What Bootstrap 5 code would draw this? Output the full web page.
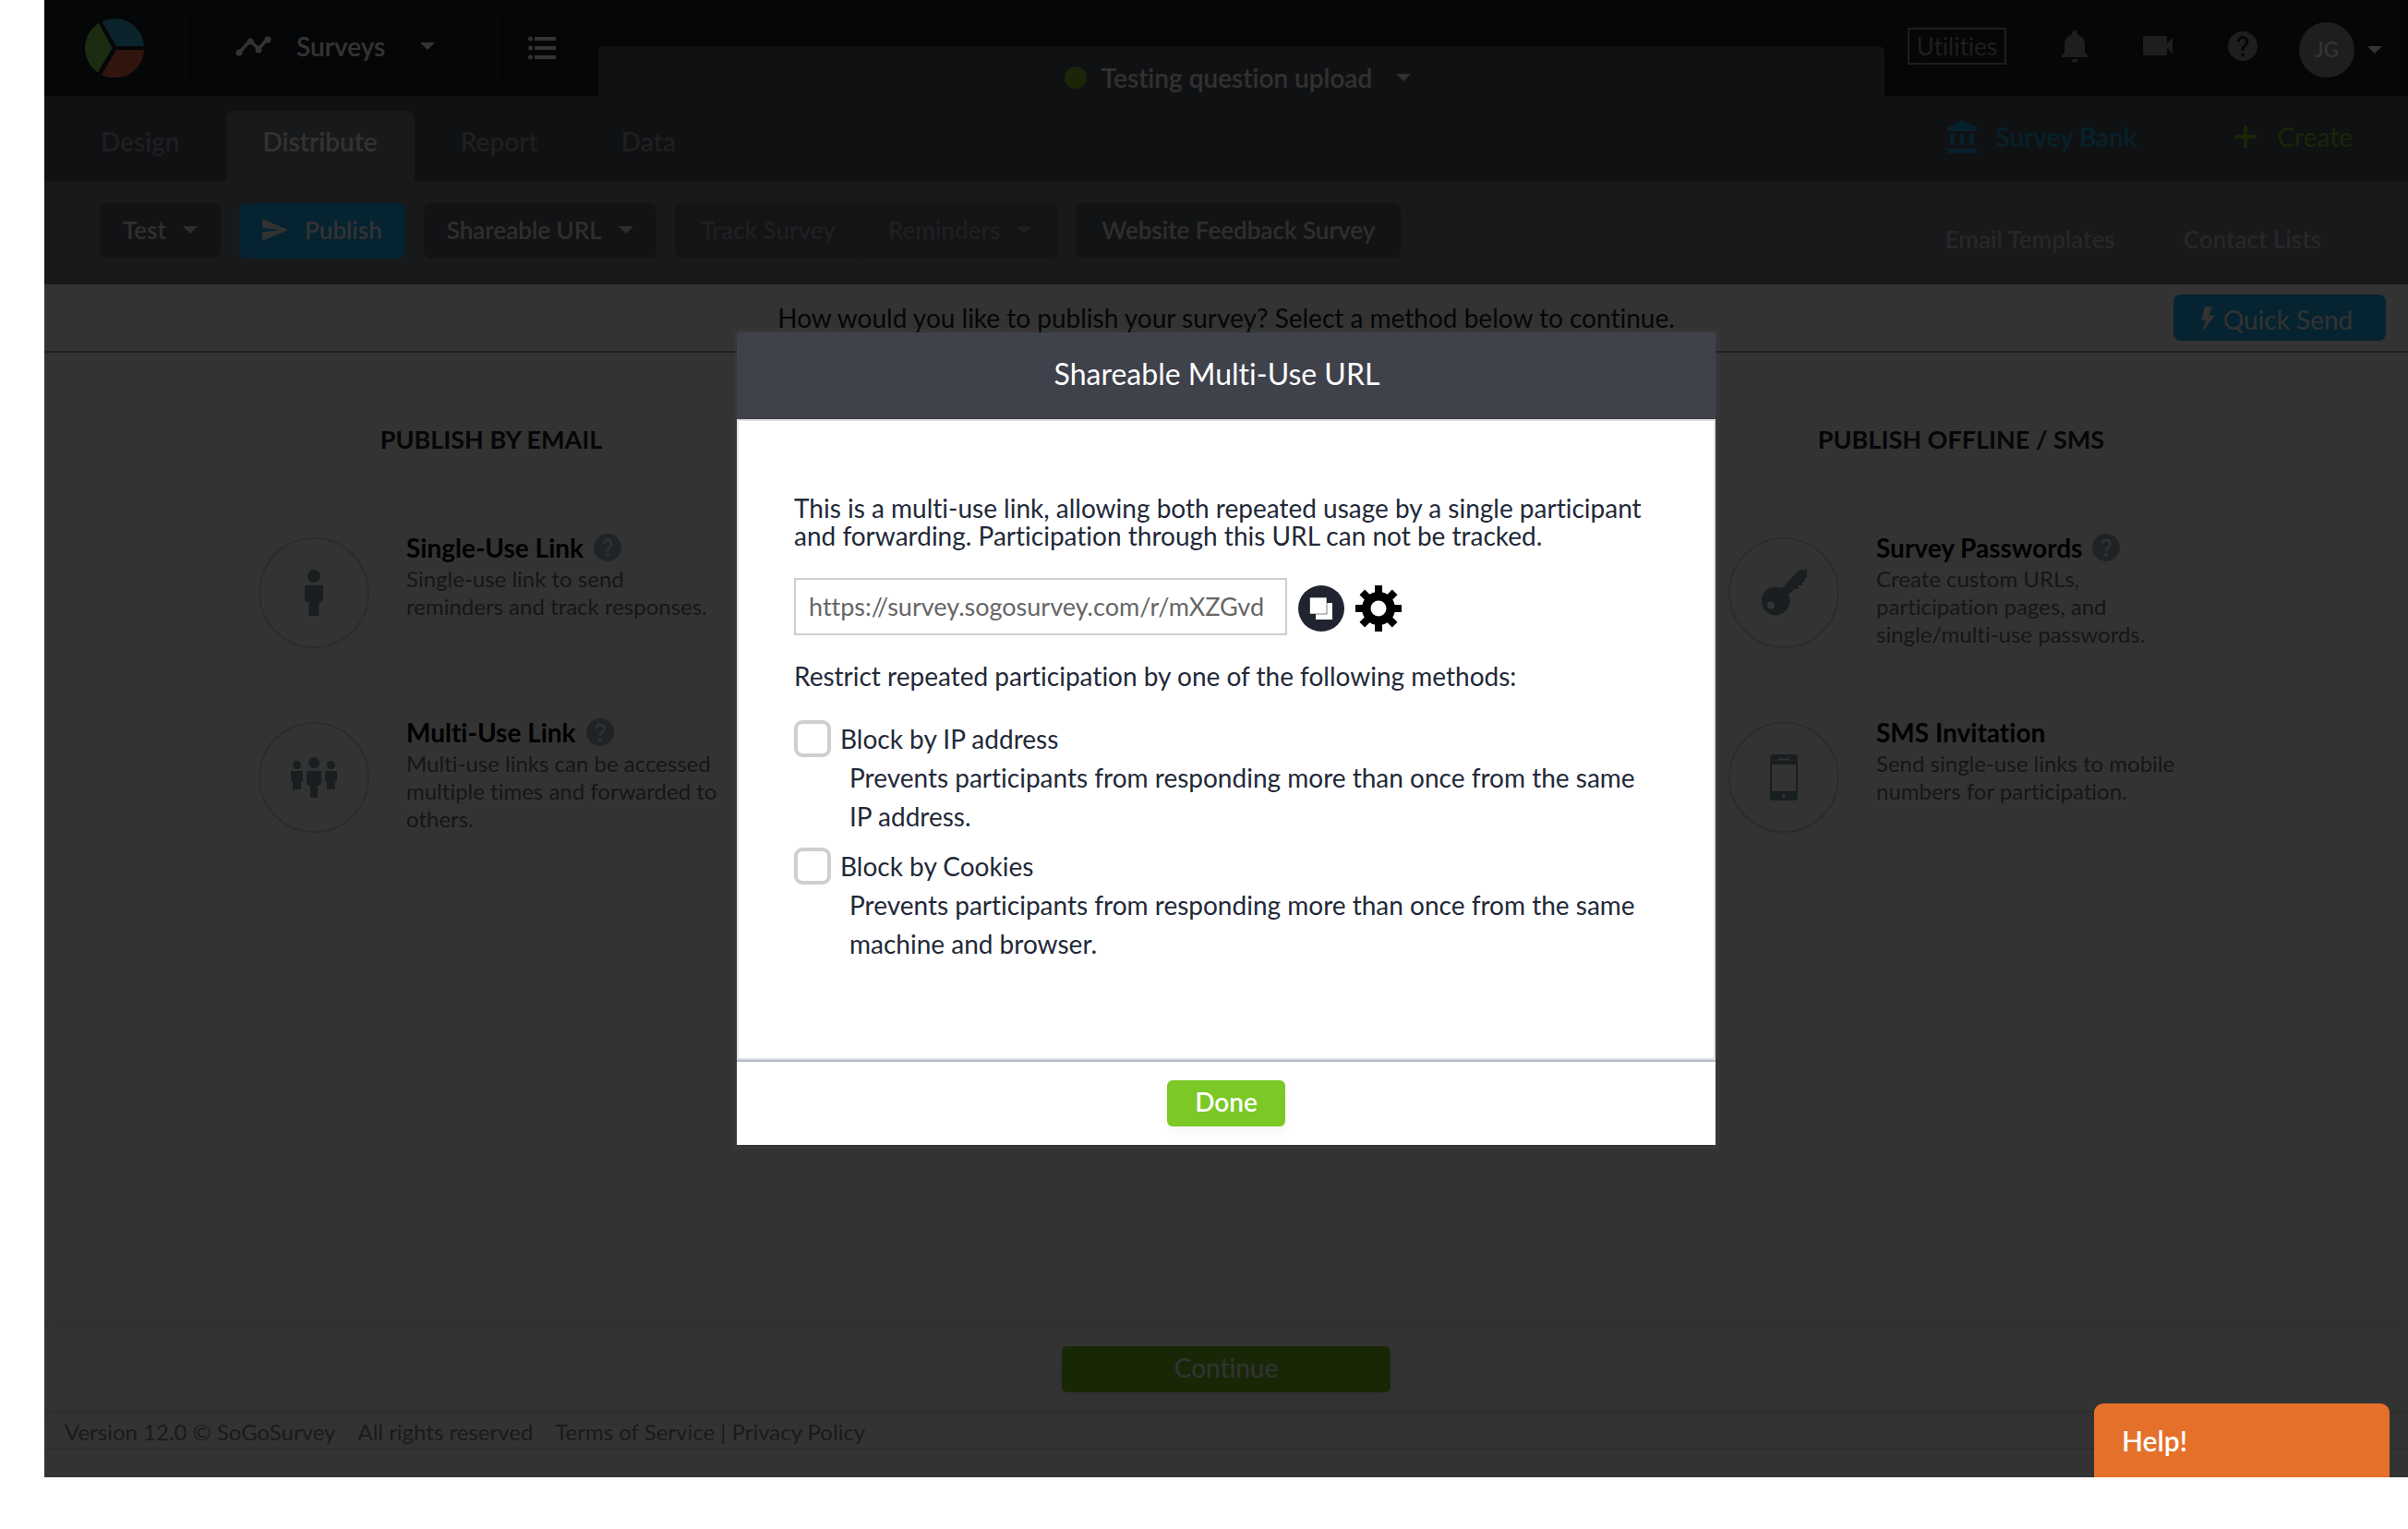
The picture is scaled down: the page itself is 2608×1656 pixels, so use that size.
<!DOCTYPE html>
<html lang="en">
<head>
<meta charset="utf-8">
<meta name="viewport" content="width=device-width, initial-scale=1">
<title>SoGoSurvey - Distribute</title>
<link href="https://cdn.jsdelivr.net/npm/bootstrap@5.3.0/dist/css/bootstrap.min.css" rel="stylesheet">
<style>
  body { font-family: Lato, "Open Sans", sans-serif; font-size: 28px; line-height: 30px; background: #fff; color: #222938; }
  body, input, button { font-variant-ligatures: none; }
  a { text-decoration: none; color: inherit; }
  svg { display: block; flex: none; fill: currentColor; }
  .app { margin: 0 0 56px 48px; min-height: calc(100vh - 56px); background: #fdfdfd; overflow: hidden; }
  .medium { font-weight: 600; }
  .dropdown-toggle { display: inline-flex; align-items: center; }
  .dropdown-toggle::after { margin-left: 18px; border: 8px solid transparent; border-top-color: currentColor; border-bottom: 0; }

  /* top bar */
  .topbar { height: 104px; background: #191e28; color: #fff; padding: 0 28px 0 44px; }
  .rule-v { width: 2px; height: 70px; background: #2d323c; }
  .brand-area { gap: 44px; }
  .module { gap: 27px; padding: 0 67px 4px 52px; }
  .module .dropdown-toggle::after { margin-left: 38px; }
  .menu-list { margin-left: 32px; }
  .survey-title { height: 54px; margin: 0 25px 0 46px; padding: 14px 8px 0 0; gap: 16px; background: #50555f; border-radius: 6px 6px 0 0; color: #f5f5f5; }
  .survey-title .dropdown-toggle::after { margin-left: 26px; }
  .live-dot { width: 24px; height: 24px; border-radius: 50%; background: #87be28; }
  .tools { gap: 60px; color: #969696; height: 100px; }
  .utilities { border: 2px solid #969696; padding: 3px 8px; font-size: 26px; }
  .user { margin: 8px 0 0 -15px; color: #fff; }
  .user.dropdown-toggle::after { margin-left: 14px; }
  .avatar { width: 60px; height: 60px; border-radius: 50%; background: #969696; font-size: 22px; }

  /* section tabs */
  .tabsrow { height: 92px; background: #50555f; padding-left: 21px; }
  .tabsrow .nav { gap: 10px; }
  .tabsrow .nav-link { height: 76px; padding: 18px 40px; border-radius: 8px 8px 0 0; color: #969ba0; font-size: 28px; font-weight: 600; }
  .tabsrow .nav-link.active { background: #787d82; color: #fafafa; }
  .shortcuts { gap: 106px; padding: 0 60px 4px 0; }
  .bank { color: #1ea5dc; gap: 20px; }
  .create { color: #87b928; gap: 22px; }

  /* action row */
  .actions { background: #787d82; padding: 24px 94px 28px 60px; }
  .action-buttons { gap: 20px; }
  .actions .btn { height: 60px; padding: 0 28px 2px; border: 0; border-radius: 8px; background: #5a5f64; color: #e6e6e6; font-size: 26px; font-weight: 600; line-height: 30px; }
  .actions .action-buttons > .dropdown-toggle { padding: 0 25px 2px; }
  .actions .btn-publish { background: #19afee; color: #fafafa; gap: 18px; padding: 0 25px 2px; display: inline-flex; align-items: center; }
  .actions .btn:disabled { background: #5f646e; color: #969ba0; opacity: 1; }
  .actions .btn-group .btn + .btn { border-left: 2px solid #6e737d; }
  .sublinks { gap: 74px; padding-top: 18px; font-size: 26px; color: #bec3c8; }

  /* prompt */
  .prompt { height: 74px; border-bottom: 2px solid #8caabe; padding: 0 24px; color: #191e28; }
  .btn-quick { width: 230px; height: 50px; border: 0; border-radius: 8px; background: #19afee; color: #fafafa; font-size: 28px; line-height: 30px; padding: 4px 6px 0 0; gap: 9px; }

  /* methods */
  .methods { padding: 79px 86px 0; }
  .methods h2 { font-size: 27px; line-height: 30px; font-weight: 700; margin: 0 0 87px; color: #191e28; text-align: center; }
  .method { min-height: 200px; padding-left: 146px; gap: 40px; }
  .method-icon { width: 120px; height: 120px; margin-top: 4px; border: 2px solid #d7d7d7; border-radius: 50%; color: #7d96a0; flex: none; }
  .method h3 { font-size: 28px; line-height: 30px; font-weight: 700; margin: 0 0 4px; color: #000; gap: 11px; }
  .method p { font-size: 24px; line-height: 30px; color: #6e6e6e; margin: 0; white-space: nowrap; }
  .hint { color: #9bafb9; }

  .continue-bar { padding: 20px 0; box-shadow: 0 0 20px rgba(0, 0, 0, .12); }
  .btn-go { background: #7bc826; color: #fff; border: 0; border-radius: 6px; height: 50px; line-height: 30px; padding: 0 0 4px; box-shadow: 0 6px 12px rgba(0, 0, 0, .04); }
  .btn-go:hover { background: #6fb522; color: #fff; }
  .btn-continue { width: 356px; font-size: 28px; }
  .legal { height: 42px; margin-bottom: 30px; padding: 4px 22px 0; gap: 24px; border-top: 2px solid #e6e6e6; border-bottom: 2px solid #e6e6e6; font-size: 24px; color: #828296; }

  /* dialog */
  .dim { background: rgba(0, 0, 0, .8); z-index: 10; }
  .share-modal { z-index: 20; }
  .share-modal .modal-dialog { max-width: 1060px; margin: 360px auto 0; }
  .share-modal .modal-content { border: 0; border-radius: 0; color: #222938; box-shadow: 0 0 0 4px rgba(255, 255, 255, .02); }
  .share-modal .modal-header { height: 94px; padding: 0 20px 4px 0; border: 0; border-radius: 0; background: #3f424b; color: #fff; }
  .share-modal .modal-title { font-size: 32px; line-height: 40px; font-weight: 400; }
  .share-modal .modal-body { padding: 79px 66px 92px 60px; border: 2px solid #dfe1e6; border-bottom: 0; }
  .share-modal .modal-footer { padding: 20px; border-radius: 0; border-top: 2px solid #b2bac4; box-shadow: 0 -2px 0 #dfe1e6; }
  .share-modal .modal-footer > * { margin: 0; }
  .url-row { margin: 31px 0 29px; gap: 12px; }
  .url-box { width: 534px; height: 62px; border: 2px solid #cfcfcf; border-radius: 0; padding: 0 14px 2px; font-size: 27px; color: #666; }
  .restrict { margin: 0 0 33px; }
  .icon-btn { background: none; border: 0; padding: 4px 0 0; }
  .share-modal .form-check { padding: 0; margin: 0 0 13px; min-height: 0; }
  .share-modal .form-check-input { float: none; width: 40px; height: 40px; margin: 0 10px 0 0; border: 4px solid #cfcfcf; border-radius: 9px; }
  .explain { padding: 1px 0 0 60px; line-height: 42px; }
  .btn-done { width: 128px; font-size: 28px; font-weight: 600; }

  .help-tab { right: 20px; bottom: 0; width: 320px; height: 80px; z-index: 30; border: 0; border-radius: 10px 10px 0 0; background: #e5702a; color: #fff; font-size: 30px; font-weight: 600; padding: 0 30px; text-align: left; }
</style>
</head>
<body>
<div class="app position-relative d-flex flex-column">

  <header class="topbar d-flex">
    <div class="brand-area d-flex align-items-center">
      <a href="#" aria-label="SoGoSurvey home">
        <svg width="64" height="64" viewBox="0 0 64 64"><path fill="#37b4dc" d="M18.500 3.500A31.500 31.500 0 0 1 64 30H34z"/><path fill="#f06446" d="M34 34H64A31.500 31.500 0 0 1 18 61z"/><path fill="#87dc50" d="M15 5A32 32 0 0 0 14 58.500L29.500 32z"/></svg>
      </a>
      <div class="rule-v"></div>
    </div>
    <div class="module d-flex align-items-center">
      <svg width="40" height="24" viewBox="0 0 40 24"><path d="M5 19L17 6l9 9L36 4" fill="none" stroke="currentColor" stroke-width="3.500"/><circle cx="5" cy="19" r="3.500"/><circle cx="17" cy="7" r="3.500"/><circle cx="26" cy="16" r="3.500"/><circle cx="36" cy="5" r="3.500"/></svg>
      <a href="#" class="dropdown-toggle medium">Surveys</a>
    </div>
    <div class="d-flex align-items-center">
      <div class="rule-v"></div>
      <a href="#" class="menu-list" aria-label="All surveys"><svg width="30" height="26" viewBox="0 0 30 26"><circle cx="2.500" cy="3" r="2.500"/><circle cx="2.500" cy="13" r="2.500"/><circle cx="2.500" cy="23" r="2.500"/><path d="M7 1h23v4H7zM7 11h23v4H7zM7 21h23v4H7z"/></svg></a>
    </div>
    <div class="survey-title flex-grow-1 align-self-end d-flex align-items-center justify-content-center">
      <span class="live-dot"></span>
      <a href="#" class="dropdown-toggle medium">Testing question upload</a>
    </div>
    <div class="tools d-flex align-items-center">
      <a href="#" class="utilities">Utilities</a>
      <a href="#" aria-label="Notifications"><svg width="28" height="36" viewBox="0 0 28 36"><path d="M11 4a3 3 0 0 1 6 0v1.500c5 1.300 8 5.500 8 10.500v9l3 3v2H0v-2l3-3v-9C3 11 6 6.800 11 5.500zM10.500 32h7a3.500 3.500 0 0 1-7 0z"/></svg></a>
      <a href="#" aria-label="Videos"><svg width="32" height="22" viewBox="0 0 32 22"><path d="M2 0h22a2 2 0 0 1 2 2v6l6-6v17l-6-6v6a2 2 0 0 1-2 2H2a2 2 0 0 1-2-2V2a2 2 0 0 1 2-2z"/></svg></a>
      <a href="#" aria-label="Help"><svg width="32" height="32" viewBox="0 0 24 24"><path d="M12 0a12 12 0 1 0 0 24 12 12 0 0 0 0-24zm1.200 20.400h-2.400V18h2.400zm2.500-9.300-1.100 1.100c-.9.900-1.400 1.600-1.400 3.400h-2.400V15c0-1.300.5-2.500 1.400-3.400l1.500-1.500c.4-.4.700-1 .7-1.700a2.400 2.400 0 0 0-4.800 0H7.200a4.800 4.800 0 0 1 9.600 0c0 1.100-.4 2-1.100 2.700z"/></svg></a>
      <a href="#" class="user dropdown-toggle"><span class="avatar d-flex align-items-center justify-content-center medium">JG</span></a>
    </div>
  </header>

  <div class="tabsrow d-flex justify-content-between">
    <nav class="nav align-self-end">
      <a class="nav-link" href="#">Design</a>
      <a class="nav-link active" href="#">Distribute</a>
      <a class="nav-link" href="#">Report</a>
      <a class="nav-link" href="#">Data</a>
    </nav>
    <div class="shortcuts d-flex align-items-center">
      <a href="#" class="bank medium d-flex align-items-center"><svg width="32" height="36" viewBox="0 0 32 36"><path d="M16 0l16 8v4H0V8zM3 15h5v12H3zM13.500 15h5v12h-5zM24 15h5v12h-5zM0 31h32v5H0z"/></svg>Survey Bank</a>
      <a href="#" class="create d-flex align-items-center"><svg width="24" height="24" viewBox="0 0 24 24"><path d="M10 0h4v10h10v4H14v10h-4V14H0v-4h10z"/></svg>Create</a>
    </div>
  </div>

  <div class="actions d-flex justify-content-between">
    <div class="action-buttons d-flex">
      <button type="button" class="btn dropdown-toggle">Test</button>
      <button type="button" class="btn btn-publish"><svg width="28" height="24" viewBox="0 0 28 24"><path d="M0 0l28 12L0 24v-9.500L19 12 0 9.500z"/></svg>Publish</button>
      <button type="button" class="btn dropdown-toggle">Shareable URL</button>
      <div class="btn-group">
        <button type="button" class="btn" disabled>Track Survey</button>
        <button type="button" class="btn dropdown-toggle" disabled>Reminders</button>
      </div>
      <button type="button" class="btn">Website Feedback Survey</button>
    </div>
    <div class="sublinks d-flex align-items-center medium">
      <a href="#">Email Templates</a>
      <a href="#">Contact Lists</a>
    </div>
  </div>

  <div class="prompt d-flex align-items-center">
    <div class="flex-fill w-25"></div>
    <div class="text-nowrap">How would you like to publish your survey? Select a method below to continue.</div>
    <div class="flex-fill w-25 d-flex justify-content-end">
      <button type="button" class="btn btn-quick d-flex align-items-center justify-content-center"><svg width="15" height="28" viewBox="0 0 15 28"><path d="M4 0h8L8.500 9.500H15L1 28 4.500 15H0z"/></svg>Quick Send</button>
    </div>
  </div>

  <main class="methods flex-grow-1">
    <div class="row g-0">
      <section class="col-4">
        <h2>PUBLISH BY EMAIL</h2>
        <div class="method d-flex">
          <span class="method-icon d-flex align-items-center justify-content-center"><svg width="20" height="50" viewBox="0 0 20 50"><circle cx="10" cy="7" r="7"/><path d="M0 17h20v14a4 4 0 0 1-4.500 4.500V50h-11V35.500A4 4 0 0 1 0 31z"/></svg></span>
          <div>
            <h3 class="d-flex align-items-center">Single-Use Link <svg class="hint" width="30" height="30" viewBox="0 0 30 30"><use href="#q"/></svg></h3>
            <p>Single-use link to send<br>reminders and track responses.</p>
          </div>
        </div>
        <div class="method d-flex">
          <span class="method-icon d-flex align-items-center justify-content-center"><svg width="50" height="44" viewBox="0 0 50 44"><circle cx="25" cy="6" r="6"/><path d="M17 15h16v12a4 4 0 0 1-4 4v13h-8V31a4 4 0 0 1-4-4z"/><circle cx="6.500" cy="8.500" r="4.500"/><path d="M0 15h13v9a3 3 0 0 1-2 3v8H2v-8a3 3 0 0 1-2-3z"/><circle cx="43.500" cy="8.500" r="4.500"/><path d="M37 15h13v9a3 3 0 0 1-2 3v8h-9v-8a3 3 0 0 1-2-3z"/></svg></span>
          <div>
            <h3 class="d-flex align-items-center">Multi-Use Link <svg class="hint" width="30" height="30" viewBox="0 0 30 30"><use href="#q"/></svg></h3>
            <p>Multi-use links can be accessed<br>multiple times and forwarded to<br>others.</p>
          </div>
        </div>
      </section>
      <section class="col-4 offset-4">
        <h2>PUBLISH OFFLINE / SMS</h2>
        <div class="method d-flex">
          <span class="method-icon d-flex align-items-center justify-content-center"><svg width="50" height="50" viewBox="0 0 50 50"><path fill-rule="evenodd" d="M23 20L42 0h8v8l-2 1v4h-3v4h-4v4h-4l-7 6a15.500 15.500 0 1 1-7-7zM11 34.500a4 4 0 1 0 0 8 4 4 0 0 0 0-8z"/></svg></span>
          <div>
            <h3 class="d-flex align-items-center">Survey Passwords <svg class="hint" width="30" height="30" viewBox="0 0 30 30"><use href="#q"/></svg></h3>
            <p>Create custom URLs,<br>participation pages, and<br>single/multi-use passwords.</p>
          </div>
        </div>
        <div class="method d-flex">
          <span class="method-icon d-flex align-items-center justify-content-center"><svg width="30" height="50" viewBox="0 0 30 50"><path fill-rule="evenodd" d="M4 0h22a4 4 0 0 1 4 4v42a4 4 0 0 1-4 4H4a4 4 0 0 1-4-4V4a4 4 0 0 1 4-4zM2 11v29h26V11zM9 4.500v2h12v-2zM15 43a2 2 0 1 0 0 4 2 2 0 0 0 0-4z"/></svg></span>
          <div>
            <h3>SMS Invitation</h3>
            <p>Send single-use links to mobile<br>numbers for participation.</p>
          </div>
        </div>
      </section>
    </div>
  </main>

  <div class="continue-bar d-flex justify-content-center">
    <button type="button" class="btn btn-go btn-continue">Continue</button>
  </div>
  <footer class="legal d-flex align-items-center">
    <span>Version 12.0 © SoGoSurvey</span>
    <span>All rights reserved</span>
    <span><a href="#">Terms of Service</a> | <a href="#">Privacy Policy</a></span>
  </footer>

  <div class="dim position-absolute top-0 start-0 w-100 h-100"></div>

  <div class="modal share-modal position-absolute d-block" tabindex="-1" role="dialog" aria-labelledby="shareTitle">
    <div class="modal-dialog">
      <div class="modal-content">
        <div class="modal-header justify-content-center">
          <h1 class="modal-title" id="shareTitle">Shareable Multi-Use URL</h1>
        </div>
        <div class="modal-body">
          <p class="m-0">This is a multi-use link, allowing both repeated usage by a single participant and forwarding. Participation through this URL can not be tracked.</p>
          <div class="url-row d-flex align-items-center">
            <input type="text" class="form-control url-box" aria-label="Survey link" value="https://survey.sogosurvey.com/r/mXZGvd">
            <button type="button" class="icon-btn" aria-label="Copy link"><svg width="50" height="50" viewBox="0 0 50 50"><circle cx="25" cy="25" r="25" fill="#1f2430"/><path fill="#fff" d="M19 19h18v18H19z"/><path fill="#fff" stroke="#1f2430" stroke-opacity=".6" d="M12.500 13h18.500v18H12.500z"/></svg></button>
            <button type="button" class="icon-btn" aria-label="Link settings"><svg width="50" height="50" viewBox="0 0 50 50" fill="#000"><path fill-rule="evenodd" d="M25 7a18 18 0 1 0 0 36 18 18 0 0 0 0-36zM25 16.500a8.500 8.500 0 1 1 0 17 8.500 8.500 0 0 1 0-17z"/><g id="teeth"><path d="M21 0h8v10h-8zM21 40h8v10h-8zM0 21h10v8H0zM40 21h10v8H40z"/></g><use href="#teeth" transform="rotate(45 25 25)"/></svg></button>
          </div>
          <p class="restrict">Restrict repeated participation by one of the following methods:</p>
          <div class="form-check">
            <div class="d-flex align-items-center">
              <input class="form-check-input" type="checkbox" id="blockIp" aria-describedby="ipNote">
              <label class="form-check-label" for="blockIp">Block by IP address</label>
            </div>
            <div class="explain" id="ipNote">Prevents participants from responding more than once from the same IP address.</div>
          </div>
          <div class="form-check">
            <div class="d-flex align-items-center">
              <input class="form-check-input" type="checkbox" id="blockCookies" aria-describedby="cookieNote">
              <label class="form-check-label" for="blockCookies">Block by Cookies</label>
            </div>
            <div class="explain" id="cookieNote">Prevents participants from responding more than once from the same machine and browser.</div>
          </div>
        </div>
        <div class="modal-footer justify-content-center">
          <button type="button" class="btn btn-go btn-done">Done</button>
        </div>
      </div>
    </div>
  </div>

  <button type="button" class="help-tab position-absolute">Help!</button>
</div>

<svg width="0" height="0" class="position-absolute" aria-hidden="true">
  <defs>
    <g id="q"><circle cx="15" cy="15" r="15"/><path d="M11 11a4.200 4.200 0 1 1 6.500 3.500c-1.800 1.200-2.500 2-2.500 4.500" fill="none" stroke="#f5f5f5" stroke-width="2.500"/><circle cx="15" cy="23" r="2" fill="#f5f5f5"/></g>
  </defs>
</svg>
<script src="https://cdn.jsdelivr.net/npm/bootstrap@5.3.0/dist/js/bootstrap.bundle.min.js"></script>
</body>
</html>
